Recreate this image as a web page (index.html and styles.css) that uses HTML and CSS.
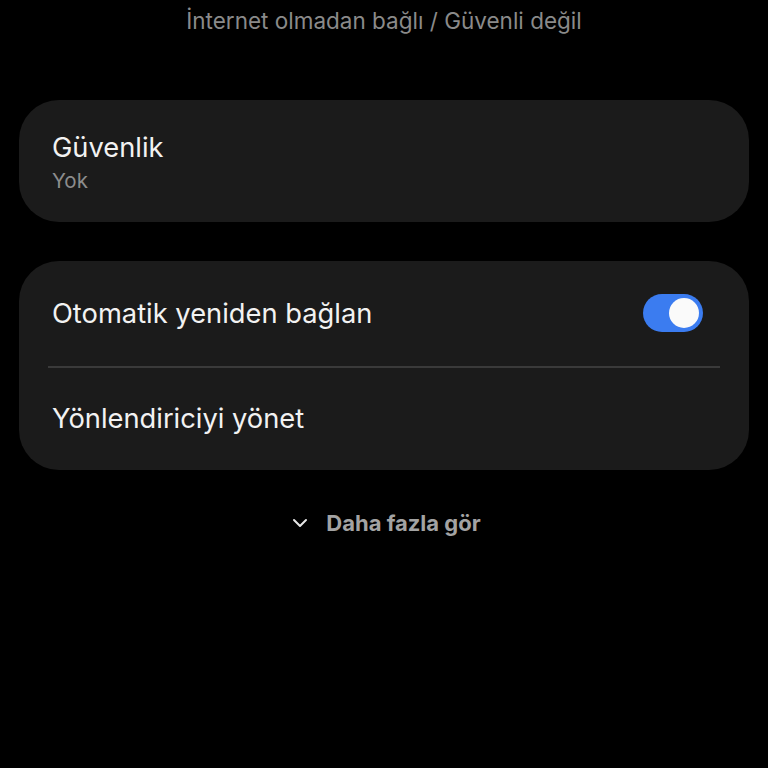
FILE: index.html
```html
<!DOCTYPE html>
<html lang="tr">
<head>
<meta charset="utf-8">
<link rel="stylesheet" href="styles.css">
</head>
<body>
<div class="screen">
  <div class="status">İnternet olmadan bağlı / Güvenli değil</div>
  <div class="card card-security">
    <div class="title">Güvenlik</div>
    <div class="sub">Yok</div>
  </div>
  <div class="card card-options">
    <div class="row row-first">
      <div class="title">Otomatik yeniden bağlan</div>
      <div class="toggle"><div class="knob"></div></div>
    </div>
    <div class="divider"></div>
    <div class="row row-second">
      <div class="title">Yönlendiriciyi yönet</div>
    </div>
  </div>
  <div class="more">
    <svg class="chev" width="16" height="10" viewBox="0 0 16 10"><path d="M2 2 L8 8 L14 2" fill="none" stroke="#e6e6e6" stroke-width="2" stroke-linecap="round" stroke-linejoin="round"/></svg>
    <span class="more-text">Daha fazla gör</span>
  </div>
</div>
</body>
</html>
```
FILE: styles.css
```css
html, body {
  margin: 0;
  padding: 0;
  background: #000;
}
.screen {
  width: 768px;
  height: 768px;
  background: #000;
  font-family: Inter, Roboto, "Noto Sans", sans-serif;
  display: flex;
  flex-direction: column;
  align-items: center;
}
.status {
  margin-top: 6px;
  height: 30px;
  line-height: 30px;
  font-size: 22.5px;
  color: #8a8a8a;
}
.card {
  box-sizing: border-box;
  width: 730px;
  background: #1b1b1b;
  border-radius: 40px;
  padding: 0 33px;
}
.card-security {
  margin-top: 64px;
  height: 122px;
  padding-top: 31px;
}
.title {
  font-size: 27.3px;
  color: #f2f2f2;
  line-height: 34px;
}
.sub {
  font-size: 20.5px;
  color: #8c8c8c;
  line-height: 26px;
  margin-top: 3px;
}
.card-options {
  margin-top: 39px;
  padding: 0 29px;
}
.row {
  display: flex;
  align-items: center;
  justify-content: space-between;
  padding-left: 4px;
}
.row-first {
  height: 105px;
}
.row-second {
  height: 102px;
}
.divider {
  height: 2px;
  background: #3a3a3a;
}
.toggle {
  width: 60px;
  height: 38px;
  border-radius: 19px;
  background: #3b7cf0;
  display: flex;
  align-items: center;
  justify-content: flex-end;
  padding-right: 4px;
  box-sizing: border-box;
  margin-right: 17px;
  margin-top: -2px;
}
.knob {
  width: 30px;
  height: 30px;
  border-radius: 50%;
  background: #fafafa;
}
.more {
  margin-top: 40px;
  display: flex;
  align-items: center;
  gap: 18px;
  margin-left: 5px;
}
.more-text {
  font-size: 22px;
  font-weight: bold;
  color: #a3a3a3;
}
```
